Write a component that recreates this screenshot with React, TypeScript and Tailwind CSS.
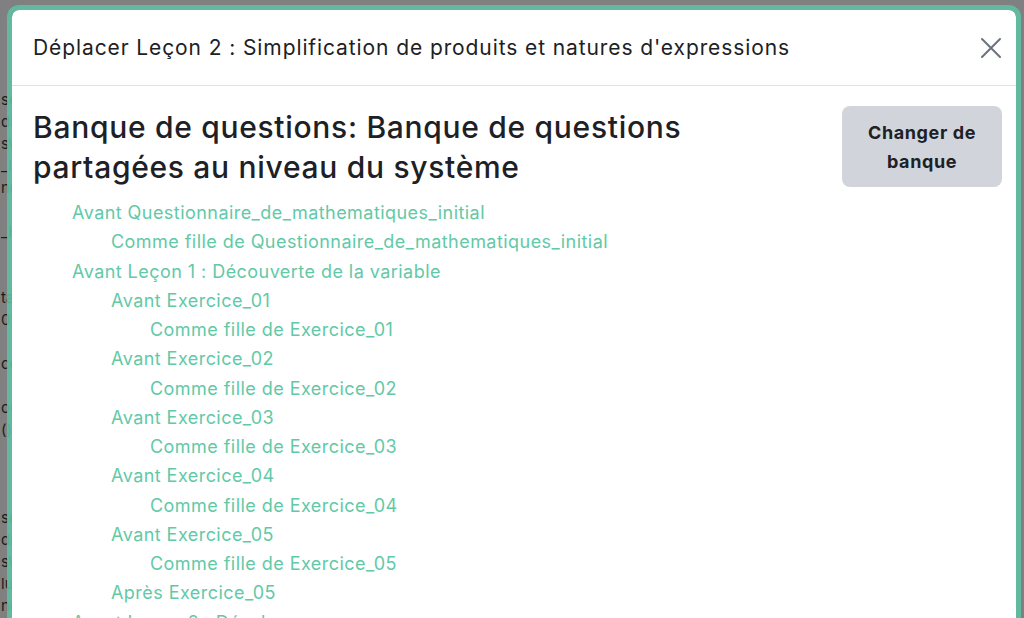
import React from "react"

interface Target {
  label: string
  level: number
}

const targets: Target[] = [
  { label: "Avant Questionnaire_de_mathematiques_initial", level: 0 },
  { label: "Comme fille de Questionnaire_de_mathematiques_initial", level: 1 },
  { label: "Avant Leçon 1 : Découverte de la variable", level: 0 },
  { label: "Avant Exercice_01", level: 1 },
  { label: "Comme fille de Exercice_01", level: 2 },
  { label: "Avant Exercice_02", level: 1 },
  { label: "Comme fille de Exercice_02", level: 2 },
  { label: "Avant Exercice_03", level: 1 },
  { label: "Comme fille de Exercice_03", level: 2 },
  { label: "Avant Exercice_04", level: 1 },
  { label: "Comme fille de Exercice_04", level: 2 },
  { label: "Avant Exercice_05", level: 1 },
  { label: "Comme fille de Exercice_05", level: 2 },
  { label: "Après Exercice_05", level: 1 },
  { label: "Avant Leçon 2 : Développer", level: 0 },
  { label: "Avant Exercice_01", level: 1 },
]

// bits of the page behind the backdrop
const pageLines = [
  "se", "dil", "s\\", "_lu", "ne", "", "_H", "", "", "ta", "01", "", "ce", "", "ou", "()",
  "", "", "", "se", "dil", "s\\", "lu", "ne", "", "",
]

const indent = ["pl-0", "pl-[39px]", "pl-[78px]"]

function CloseIcon() {
  return (
    <svg width="22" height="22" viewBox="0 0 22 22" fill="none">
      <path d="M2 2L20 20M20 2L2 20" stroke="#6a737b" strokeWidth="2" strokeLinecap="round" />
    </svg>
  )
}

export default function App() {
  return (
    <div className="relative h-[618px] w-[1024px] overflow-hidden bg-[#808080] font-['Inter','Liberation_Sans',sans-serif]">
      {/* page behind the modal */}
      <div className="flex flex-col pt-[89px] pl-[1px] text-[15px] leading-[22px] text-[#1c1c1c]">
        {pageLines.map((t, i) => (
          <div key={i} className="h-[22px] whitespace-pre">
            {t}
          </div>
        ))}
      </div>

      {/* modal */}
      <div className="absolute left-[7px] top-[5px] w-[1014px] rounded-t-[12px] border-[5px] border-b-0 border-[#5fbfa2]/90 bg-white bg-clip-padding">
        <div className="flex items-center justify-between border-b border-[#dee2e6] pl-[21px] pr-[13px] h-[76px]">
          <h5 className="text-[21px] leading-[30px] tracking-[0.9px] text-[#1d2125]">
            Déplacer Leçon 2 : Simplification de produits et natures d'expressions
          </h5>
          <button className="flex h-[24px] w-[24px] items-center justify-center">
            <CloseIcon />
          </button>
        </div>

        <div className="pl-[21px] pr-[14px] pt-[20px]">
          <div className="flex items-start gap-4">
            <h3 className="flex-1 pt-[1px] text-[30px] leading-[40px] font-medium tracking-[0.7px] text-[#1d2125]">
              Banque de questions: Banque de questions partagées au niveau du système
            </h3>
            <button className="w-[160px] h-[81px] shrink-0 rounded-lg bg-[#d1d5db] text-[18px] leading-[29px] font-bold tracking-[0.6px] text-[#1d2125]">
              Changer de
              <br />
              banque
            </button>
          </div>

          <ul className="mt-[11px] pl-[39px] text-[18px] leading-[29.25px] tracking-[0.45px] text-[#62c9a7]">
            {targets.map((t, i) => (
              <li key={i} className={indent[t.level]}>
                {t.label}
              </li>
            ))}
          </ul>
        </div>
      </div>
    </div>
  )
}
